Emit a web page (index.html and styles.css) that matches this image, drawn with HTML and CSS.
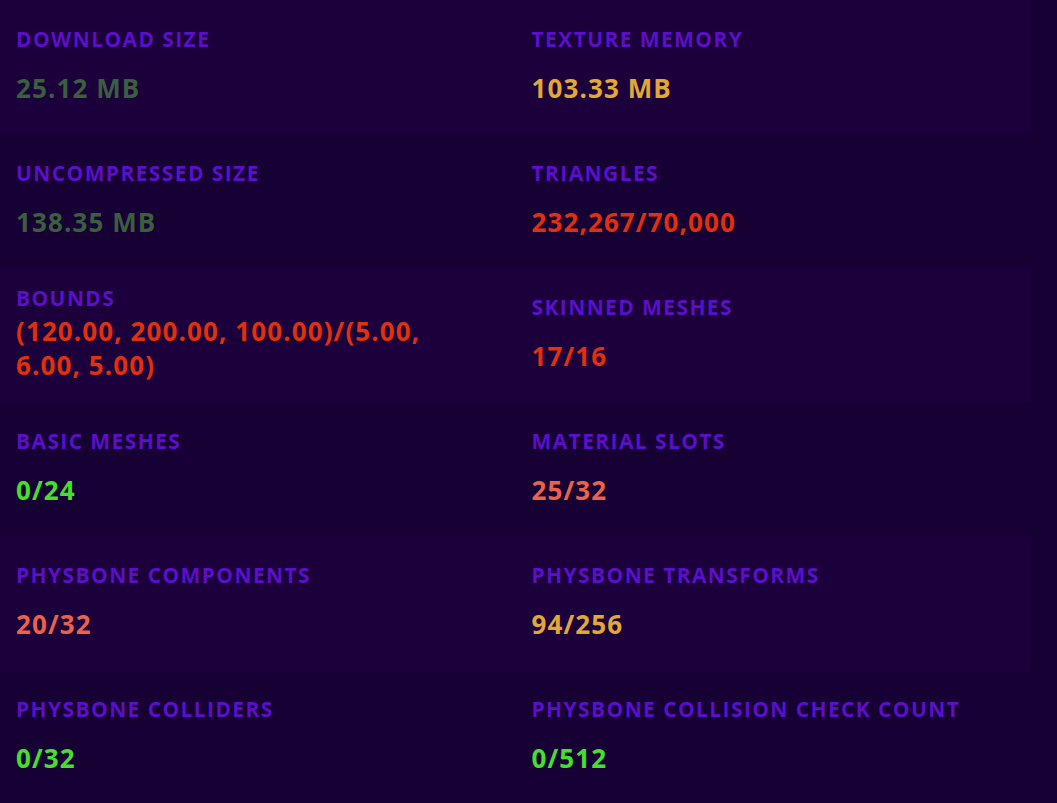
FILE: index.html
```html
<!DOCTYPE html>
<html lang="en">
<head>
<meta charset="utf-8">
<title>Avatar Stats</title>
<link rel="stylesheet" href="styles.css">
</head>
<body>
<div class="stats">
  <div class="row row--light">
    <div class="stat"><div class="stat__label">Download Size</div><div class="stat__value v-dim">25.12 MB</div></div>
    <div class="stat"><div class="stat__label">Texture Memory</div><div class="stat__value v-warn">103.33 MB</div></div>
  </div>
  <div class="row row--dark">
    <div class="stat"><div class="stat__label">Uncompressed Size</div><div class="stat__value v-dim">138.35 MB</div></div>
    <div class="stat"><div class="stat__label">Triangles</div><div class="stat__value v-bad">232,267/70,000</div></div>
  </div>
  <div class="row row--light">
    <div class="stat stat--wrap"><div class="stat__label">Bounds</div><div class="stat__value v-bad">(120.00, 200.00, 100.00)/(5.00, 6.00, 5.00)</div></div>
    <div class="stat"><div class="stat__label">Skinned Meshes</div><div class="stat__value v-bad">17/16</div></div>
  </div>
  <div class="row row--dark">
    <div class="stat"><div class="stat__label">Basic Meshes</div><div class="stat__value v-good">0/24</div></div>
    <div class="stat"><div class="stat__label">Material Slots</div><div class="stat__value v-poor">25/32</div></div>
  </div>
  <div class="row row--light">
    <div class="stat"><div class="stat__label">PhysBone Components</div><div class="stat__value v-poor">20/32</div></div>
    <div class="stat"><div class="stat__label">PhysBone Transforms</div><div class="stat__value v-warn">94/256</div></div>
  </div>
  <div class="row row--dark">
    <div class="stat"><div class="stat__label">PhysBone Colliders</div><div class="stat__value v-good">0/32</div></div>
    <div class="stat"><div class="stat__label">PhysBone Collision Check Count</div><div class="stat__value v-good">0/512</div></div>
  </div>
</div>
</body>
</html>
```
FILE: styles.css
```css
html, body {
  margin: 0;
  padding: 0;
  background: #170034;
  height: 100%;
}

body {
  font-family: "Open Sans", "Noto Sans", sans-serif;
  font-weight: 700;
}

.stats {
  width: 1031px;
  display: flex;
  flex-direction: column;
}

.row {
  display: grid;
  grid-template-columns: 1fr 1fr;
  height: 134px;
}

.row--light { background: #1c003c; }
.row--dark { background: #170034; }

.stat {
  display: flex;
  flex-direction: column;
  justify-content: center;
  padding: 0 40px 4px 16px;
  gap: 19px;
}

.stat--wrap { gap: 3px; }

.stat__label {
  font-size: 21px;
  line-height: 26px;
  text-transform: uppercase;
  letter-spacing: 1.4px;
  color: #5a0fc8;
}

.stat__value {
  font-size: 26px;
  line-height: 34px;
  letter-spacing: 1.1px;
}

.v-dim { color: #3a5e3e; }
.v-warn { color: #e0a838; }
.v-bad { color: #e0300c; }
.v-poor { color: #e8634c; }
.v-good { color: #44e02a; }
```
